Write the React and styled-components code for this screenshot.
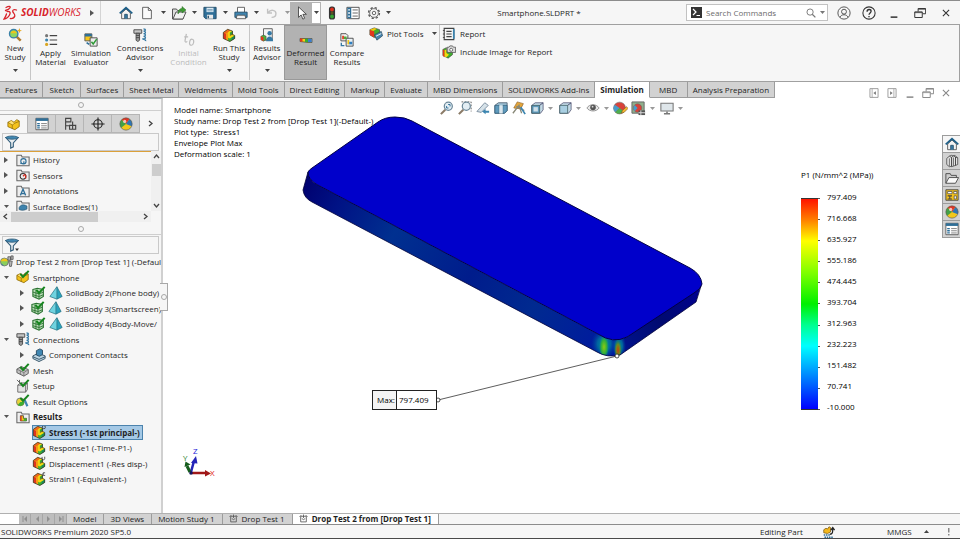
import React from 'react';
import styled, { createGlobalStyle, css } from 'styled-components';

const GlobalStyle = createGlobalStyle`
  * { box-sizing: border-box; }
  body {
    margin: 0;
    background: #fff;
    color: #1e1e1e;
    font-family: "Open Sans", "Noto Sans", sans-serif;
    font-size: 8px;
    line-height: 9px;
  }
  button, input {
    font: inherit;
    color: inherit;
    padding: 0;
    margin: 0;
    border: 0;
    background: none;
  }
  ul { list-style: none; margin: 0; padding: 0; }
  svg { display: block; flex: none; }
`

const Page = styled.div`
  display: flex;
  flex-direction: column;
  min-height: 100vh;
  border-top: 1px solid #8c8c8c;
  border-bottom: 1px solid #4a4a4a;
  background: #f6f6f6;
`

/* ---------- title bar ---------- */

const TitleBar = styled.header`
  display: flex;
  align-items: center;
  height: 24px;
  border-bottom: 1px solid #a0a0a0;
`
const Brand = styled.div`
  display: flex;
  align-items: center;
  gap: 3px;
  width: 101px;
  height: 23px;
  padding-left: 3px;
  border-right: 1px solid #d4d4d4;
`
const BrandName = styled.span`
  flex: 1;
  font-size: 10px;
  font-style: italic;
  color: #d8232a;
`
const BrandArrow = styled.button`
  width: 10px;
  display: flex;
`
const QuickBar = styled.div`
  display: flex;
  align-items: center;
  padding-left: 17px;
`
const QuickButton = styled.button`
  width: ${p => p.$w || 16}px;
  height: 20px;
  display: flex;
  align-items: center;
  justify-content: center;
`
const PointerGroup = styled.div`
  display: flex;
  border: 1px solid #b4b4b4;
  background: #fff;
  button:first-child {
    background: #b4b4b4;
  }
`
const DocTitle = styled.div`
  flex: 1;
  text-align: center;
`
const SearchBox = styled.label`
  display: flex;
  align-items: center;
  gap: 4px;
  width: 142px;
  height: 17px;
  padding: 0 2px 0 4px;
  border: 1px solid #c2c2c2;
  background: #fff;
  input {
    flex: 1;
    min-width: 0;
    outline: none;
  }
  input::placeholder { color: #6b6b6b; opacity: 1; }
`
const WindowButtons = styled.div`
  display: flex;
  align-items: center;
  padding: 0 2px 0 3px;
`

/* ---------- ribbon ---------- */

const Ribbon = styled.div`
  display: flex;
  height: 57px;
  border-bottom: 1px solid #a0a0a0;
  border-right: 1px solid #a0a0a0;
  padding-bottom: 1px;
`
const RibbonButton = styled.button`
  width: ${p => p.$w}px;
  display: flex;
  flex-direction: column;
  align-items: center;
  text-align: center;
  padding-top: ${p => (p.$menu ? 3 : 8)}px;
  border-right: ${p => (p.$line ? '1px solid #c6c6c6' : '0')};
  white-space: nowrap;
  span { margin-top: 1px; white-space: pre; }
  svg:last-child:not(:first-child) { margin-top: 8px; }
  ${p => p.$pressed && css`
    background: #b2b2b2;
    border: 1px solid #999;
    padding-top: 7px;
  `}
  &:disabled { color: #bcbcbc; }
`
const RibbonStack = styled.div`
  display: flex;
  flex-direction: column;
  gap: 3px;
  padding: 1px 0 0 2px;
  width: ${p => p.$w || 'auto'};
  border-right: ${p => (p.$line ? '1px solid #c6c6c6' : '0')};
`
const RibbonRow = styled.button`
  display: flex;
  align-items: center;
  gap: 4px;
  height: 15px;
  white-space: nowrap;
  svg:last-child:not(:first-child) { margin-left: 5px; }
`
const TabRow = styled.nav`
  display: flex;
  height: 16px;
  background: #fff;
`
const Tab = styled.button`
  min-width: 38px;
  padding: 0 5px;
  border-right: 1px solid #9c9c9c;
  border-bottom: 1px solid #9c9c9c;
  background: #d2d2d2;
  white-space: nowrap;
  ${p => p.$active && css`
    background: #fff;
    border-bottom-color: #fff;
    font-weight: 700;
  `}
`
const DocButtons = styled.div`
  display: flex;
  margin-left: auto;
  padding: 2px 5px 0 0;
  button { width: 18px; height: 18px; display: flex; align-items: center; justify-content: center; }
`

/* ---------- feature manager ---------- */

const Main = styled.main`
  flex: 1;
  display: flex;
`
const Side = styled.aside`
  position: relative;
  width: 163px;
  flex: none;
  border-top: 1px solid #a9b4b7;
  border-right: 2px solid #d0d0d0;
`
const Grip = styled.div`
  height: 12px;
  display: flex;
  align-items: center;
  justify-content: center;
  border-bottom: 1px solid #cfcfcf;
  margin-bottom: ${p => p.$gap}px;
  &::before {
    content: '';
    width: 4px;
    height: 4px;
    border: 1px solid #a8a8a8;
    border-radius: 50%;
  }
`
const ManagerTabs = styled.div`
  display: flex;
  height: 19px;
`
const ManagerTab = styled.button`
  width: 28px;
  display: flex;
  align-items: center;
  justify-content: center;
  background: ${p => (p.$active ? '#f6f6f6' : '#d2d2d2')};
  border: solid #b5b5b5;
  border-width: 1px 1px ${p => (p.$active ? 0 : 1)}px 0;
`
const MoreTabs = styled.button`
  flex: 1;
  display: flex;
  align-items: center;
  justify-content: center;
`
const FilterBox = styled.label`
  display: flex;
  align-items: center;
  height: 18px;
  margin: 0 2px;
  padding-left: 2px;
  border: 1px solid #c9c9c9;
  input { flex: 1; min-width: 0; outline: none; }
`
const FeatureArea = styled.div`
  display: grid;
  grid-template-columns: 1fr 10px;
  grid-template-rows: 60px 11px;
  margin-bottom: 1px;
`
const FeatureTree = styled.ul`
  overflow: hidden;
  border-top: 1px solid #dba03a;
`
const StudyTree = styled.ul`
  overflow: hidden;
`
const TreeRow = styled.li`
  display: flex;
  align-items: center;
  height: 15px;
  padding-left: ${p => p.$level * 16}px;
  white-space: nowrap;
  font-weight: ${p => (p.$bold ? 700 : 400)};
  &:nth-child(even) { height: 16px; }
`
const Twisty = styled.span`
  width: 13px;
  height: 11px;
  padding-left: 4px;
  margin-right: 3px;
  display: flex;
  align-items: center;
`
const NodeLabel = styled.span`
  display: flex;
  align-items: center;
  gap: ${p => (p.$root ? 2 : 3)}px;
  ${p => p.$selected && css`
    height: 15px;
    padding-right: 3px;
    background: #a5c9e6;
    outline: 1px solid #4c83ad;
    outline-offset: -1px;
    font-weight: 700;
  `}
`
const ScrollTrack = styled.div`
  display: flex;
  flex-direction: ${p => (p.$vertical ? 'column' : 'row')};
  align-items: center;
  justify-content: space-between;
  background: #f0f0f0;
  padding: ${p => (p.$vertical ? '2px 0' : '0 2px')};
`
const Thumb = styled.span`
  background: #cdcdcd;
  width: ${p => p.$w}px;
  height: ${p => p.$h}px;
  margin: ${p => (p.$vertical ? '4px 0 auto' : '0 auto 0 2px')};
`
const SplitHandle = styled.div`
  position: absolute;
  z-index: 1;
  right: -7px;
  top: 184px;
  width: 8px;
  height: 28px;
  display: flex;
  align-items: center;
  justify-content: center;
  background: #f6f6f6;
  border: 1px solid #a8a8a8;
  border-left: 0;
  &::before {
    content: '';
    width: 4px;
    height: 4px;
    border: 1px solid #a8a8a8;
    border-radius: 50%;
  }
`

/* ---------- graphics area ---------- */

const Viewport = styled.section`
  position: relative;
  flex: 1;
  min-height: 415px;
  overflow: hidden;
  background: #fff;
  color: #000;
`
const HeadsUp = styled.div`
  position: relative;
  z-index: 1;
  display: flex;
  justify-content: center;
  align-items: center;
  height: 20px;
`
const HudButton = styled.button`
  width: ${p => p.$w || 18}px;
  height: 16px;
  display: flex;
  align-items: center;
  justify-content: center;
`
const Scene = styled.svg`
  position: absolute;
  left: 0;
  top: 0;
`
const Notes = styled.div`
  position: absolute;
  left: 11px;
  top: 6px;
  line-height: 11px;
  white-space: pre;
`
const Callout = styled.div`
  position: absolute;
  left: 209px;
  top: 292px;
  display: flex;
  height: 20px;
  border: 1px solid #222;
  background: #fff;
  line-height: 18px;
  span { width: 24px; padding-left: 4px; background: #f4f4f4; border-right: 1px solid #222; }
  b { width: 39px; padding-left: 2px; font-weight: 400; }
`
const Legend = styled.div`
  position: absolute;
  right: 79px;
  top: 72px;
  width: 80px;
  white-space: nowrap;
`
const LegendScale = styled.div`
  display: flex;
  margin-top: 13px;
`
const ColorBar = styled.div`
  width: 17px;
  margin: 6px 0 1px;
  height: 212px;
  border: solid #333;
  border-width: 1px 0;
  background: linear-gradient(#ff1400, #ff8000 10%, #ffff00 20%, #80ff00 35%, #00f000 50%, #00ff90 60%, #00ffff 70%, #0080ff 85%, #0000ff);
`
const Ticks = styled.div`
  width: 2px;
  margin: 6px 0 1px;
  display: flex;
  flex-direction: column;
  justify-content: space-between;
  i { height: 1px; background: #555; }
`
const LegendValues = styled.div`
  display: flex;
  flex-direction: column;
  justify-content: space-between;
  padding-left: 7px;
`
const TaskPane = styled.div`
  position: absolute;
  right: 0;
  top: 37px;
  display: flex;
  flex-direction: column;
  border: solid #9c9c9c;
  border-width: 1px 0 0 1px;
  button {
    width: 17px;
    height: 17px;
    display: flex;
    align-items: center;
    justify-content: center;
    background: #d2d2d2;
    border-bottom: 1px solid #9c9c9c;
  }
  button:first-child { background: #f6f6f6; }
`

/* ---------- bottom ---------- */

const StudyTabs = styled.nav`
  display: flex;
  height: 12px;
  border-top: 1px solid #b0b0b0;
  border-bottom: 1px solid #8c8c8c;
`
const TabPad = styled.div`
  width: 19px;
  background: #fff;
`
const StepButton = styled.button`
  width: 12px;
  display: flex;
  align-items: center;
  justify-content: center;
  background: #bdbdbd;
  border-right: 1px solid #a6a6a6;
`
const StudyTab = styled.button`
  display: flex;
  align-items: center;
  gap: 4px;
  padding: 0 7px 1px 6px;
  white-space: nowrap;
  background: ${p => (p.$active ? '#fff' : '#d2d2d2')};
  font-weight: ${p => (p.$active ? 700 : 400)};
  border-right: 1px solid #9c9c9c;
`
const StatusBar = styled.footer`
  display: flex;
  align-items: center;
  height: 13px;
  padding: 0 9px 0 1px;
`
const Product = styled.span`
  flex: 1;
`
const StatusItem = styled.span`
  width: ${p => p.$w}px;
  display: flex;
`

/* ---------- icons ---------- */

const Svg = ({ s = 14, vb = 16, children }) => (
  <svg width={s} height={s} viewBox={`0 0 ${vb} ${vb}`} fill="none" aria-hidden="true">{children}</svg>
)

const Caret = ({ color = '#444' }) => (
  <svg width="5" height="3" viewBox="0 0 5 3"><path d="M0 0h5L2.500 3z" fill={color} /></svg>
)
const Closed = () => (
  <svg width="4" height="6" viewBox="0 0 4 6"><path d="M0 0l4 3-4 3z" fill="#555" /></svg>
)
const Chevron = ({ dir }) => {
  const turn = { right: 0, down: 90, left: 180, up: 270 }[dir]
  return (
    <svg width="7" height="7" viewBox="0 0 7 7" fill="none">
      <path d="M2 1l3 2.500-3 2.500" stroke="#444" strokeWidth="1.300" transform={`rotate(${turn} 3.500 3.500)`} />
    </svg>
  )
}
const DsLogo = () => (
  <svg width="15" height="16" viewBox="0 0 15 16" fill="none" stroke="#d8232a" strokeWidth="1.300" strokeLinecap="round">
    <path d="M3 2.500C5.500 1 8 1 7 2.800 6.500 4 4.500 5 2.500 5.500" />
    <path d="M4 6.500C7 6 7.800 7.500 6.500 10 5.300 12.300 3 13.800 1 14c1-1.500 2-3 2.500-5" />
    <path d="M13.500 5c-2-.8-4-.3-3.800 1.300.2 1.500 2.600 2.700 2.100 4.700-.5 1.900-2.300 2.700-4.500 2.500" />
  </svg>
)
const Home = () => (
  <Svg>
    <path d="M3 8v6.500h10V8L8 3.500z" fill="#f3f3f3" stroke="#555" />
    <path d="M6.500 14.500V9.500h3v5" fill="#3a7ca5" stroke="#29506b" />
    <path d="M.8 8.500L8 2l7.200 6.500" stroke="#1d5e87" strokeWidth="2" />
  </Svg>
)
const NewDoc = () => (
  <Svg><path d="M3 1.500h6.500L13 5v9.500H3z" fill="#fafafa" stroke="#555" /><path d="M9.500 1.500V5H13" stroke="#555" /></Svg>
)
const OpenDoc = () => (
  <Svg s={16}>
    <path d="M1.500 14V4h4l1 1.500H12V14z" fill="#ddd" stroke="#555" />
    <path d="M2 14L5 7h10l-3 7z" fill="#f2f2f2" stroke="#555" />
    <path d="M7 9c0-4 2-5.500 4-5.500V1.500L15 5l-4 3V6C9 6 8 7 7 9z" fill="#3f9b35" stroke="#2b6d25" strokeWidth=".5" />
  </Svg>
)
const Save = () => (
  <Svg>
    <path d="M1 1.500h14v13H3l-2-2z" fill="#2f6f98" stroke="#234b66" />
    <path d="M4 2h8v5H4z" fill="#dbe9f2" /><path d="M4.500 10h7v4.500h-7z" fill="#e9e9e9" />
    <path d="M6 11v3" stroke="#234b66" strokeWidth="1.500" /><path d="M5 4h6M5 5.500h6" stroke="#7ba0b8" />
  </Svg>
)
const Print = () => (
  <Svg>
    <path d="M4 7V1.500h8V7" fill="#fff" stroke="#555" /><path d="M1 7h14v6H1z" fill="#3f85b0" stroke="#234b66" />
    <path d="M3.500 10.500h9l1 4h-11z" fill="#f3f3f3" stroke="#555" />
  </Svg>
)
const Undo = () => (
  <Svg><path d="M3 3v5h5M3.500 7.500c3-4 9-3 9 1s-3 4.500-5 4.500" stroke="#c2c2c2" strokeWidth="1.600" /></Svg>
)
const Pointer = () => (
  <Svg><path d="M4 1v12l3-2.800 2 4.800 2-1-2-4.500h4z" fill="#fff" stroke="#333" strokeWidth=".9" /></Svg>
)
const Traffic = () => (
  <Svg>
    <rect x="4.500" y=".5" width="7" height="15" rx="3" fill="#333" />
    <circle cx="8" cy="4" r="2.200" fill="#e0301e" /><circle cx="8" cy="8" r="1.600" fill="#5b5320" /><circle cx="8" cy="12" r="2.200" fill="#35a632" />
  </Svg>
)
const ListPanel = () => (
  <Svg>
    <path d="M1 1.500h14v13H1z" fill="#fff" stroke="#444" /><path d="M1.500 2h4.500v12H1.500z" fill="#2f6f98" />
    <path d="M2.500 4.500h2M2.500 8h2M2.500 11.500h2" stroke="#fff" strokeWidth="1.500" />
    <path d="M7.500 4.500h6M7.500 8h6M7.500 11.500h6" stroke="#555" />
  </Svg>
)
const PropertyPanel = () => (
  <Svg>
    <path d="M1 1.500h14v13H1z" fill="#fff" stroke="#555" /><path d="M1 1.500h14v3H1z" fill="#2f6f98" />
    <path d="M2.500 7.500h3M2.500 10h3M2.500 12.500h3" stroke="#2f6f98" strokeWidth="1.500" />
    <path d="M7 7.500h6.500M7 10h6.500M7 12.500h6.500" stroke="#777" />
  </Svg>
)
const Gear = () => (
  <Svg>
    <circle cx="8" cy="8" r="6.200" stroke="#555" strokeWidth="1.600" strokeDasharray="2.600 2.270" />
    <circle cx="8" cy="8" r="5" fill="#f6f6f6" stroke="#555" strokeWidth=".9" /><circle cx="8" cy="8" r="2" stroke="#555" />
  </Svg>
)
const Prompt = () => (
  <svg width="11" height="11" viewBox="0 0 11 11"><path d="M0 0h11v11H0z" fill="#333" /><path d="M2 2l3 3-3 3M5.500 8.500H9" stroke="#fff" strokeWidth="1.200" fill="none" /></svg>
)
const Magnifier = () => (
  <Svg s={10}><circle cx="6.500" cy="6.500" r="5" stroke="#777" strokeWidth="1.500" /><path d="M10 10l5 5" stroke="#777" strokeWidth="2" /></Svg>
)
const User = () => (
  <Svg><circle cx="8" cy="8" r="7" stroke="#444" /><circle cx="8" cy="6.500" r="2.800" stroke="#444" /><path d="M3.500 13c1-4 8-4 9 0" stroke="#444" /></Svg>
)
const Help = () => (
  <Svg><circle cx="8" cy="8" r="7" stroke="#333" strokeWidth="1.200" /><path d="M5.800 6.500c0-3.500 4.600-3 4.600-.5C10.400 7.800 8 8 8 10M8 11.300v1.600" stroke="#333" strokeWidth="1.500" /></Svg>
)
const Minimize = ({ c = '#333' }) => <Svg s={12}><path d="M3.500 13.500h9" stroke={c} strokeWidth="2" /></Svg>
const Restore = ({ c = '#333' }) => (
  <Svg s={12}><path d="M5.500 6V2h10v7h-4" stroke={c} strokeWidth="1.300" /><path d="M1 6.500h10V14H1z" stroke={c} strokeWidth="1.300" /><path d="M1 7.500h10M5.500 3h10" stroke={c} /></Svg>
)
const CloseX = ({ c = '#333' }) => <Svg s={10}><path d="M3 3l10 10M13 3L3 13" stroke={c} strokeWidth="1.700" /></Svg>
const Dock = ({ flip }) => (
  <Svg s={10}>
    <g transform={flip ? 'translate(16 0) scale(-1 1)' : undefined}>
      <path d="M1.500 1h13v14h-13z" stroke="#9a9a9a" strokeWidth="1.500" /><path d="M5 1v14" stroke="#9a9a9a" strokeWidth="1.200" /><path d="M11 5v6L7 8z" fill="#777" />
    </g>
  </Svg>
)

// the rainbow bracket that marks every simulation plot
const Plot = ({ s = 14, mark }) => (
  <Svg s={s}>
    <path d="M1.500 5l5-3.500 5.500 2v3l2.500 2V12L9 15.500 1.500 12z" fill="#f5d90f" />
    <path d="M1.500 5l3.500 1.500V13.500L1.500 12z" fill="#e0351f" />
    <path d="M1.500 5l5-3.500 3 1L5 6.500z" fill="#ee6a1a" />
    <path d="M5 6.500l2-1v8l2 2-4-2z" fill="#f59a14" />
    <path d="M12 3.500v3L9 8V5.500z" fill="#2f9c33" />
    <path d="M7 11l2 1 5.500-3.500V12L9 15.500l-2-1z" fill="#3fae2f" />
    <path d="M11 11l3.500-2.200V12L11 14.200z" fill="#1f8a5a" />
    <path d="M12 3.500L6.500 1.500l-5 3.500v7L9 15.500l5.500-3.500V8.500l-2.500-1z" stroke="#2a2a2a" strokeWidth=".8" />
    <path d="M9 8.500l3-1.500" stroke="#333" strokeWidth=".8" />
    {mark === 'o' && <circle cx="13.500" cy="2.500" r="1.800" stroke="#333" strokeWidth=".9" />}
    {mark === 'u' && <path d="M11.500 1v2.500c1 1.500 3 1 3-.5V.8" stroke="#333" strokeWidth=".9" />}
    {mark === 'e' && <path d="M15 1c-3-.8-3.500 1-1.500 1.300-2.500.2-2 2.200 1.500 1.500" stroke="#333" strokeWidth=".9" />}
  </Svg>
)
const NewStudy = () => (
  <Svg>
    <path d="M9.500 9.500l5 5" stroke="#b07a2c" strokeWidth="2.800" />
    <circle cx="6.500" cy="6.500" r="4.800" fill="#8fd45f" stroke="#3a81a8" strokeWidth="1.600" /><path d="M3 6c1.500-4 6-3.500 7 0z" fill="#f0c419" />
    <path d="M13 0l.8 2.200L16 3l-2.200.8L13 6l-.8-2.200L10 3l2.200-.8z" fill="#e9a81c" />
  </Svg>
)
const Material = () => (
  <Svg>
    <circle cx="3" cy="3" r="1.800" fill="#777" /><circle cx="3" cy="8" r="1.800" fill="#3c85b0" /><circle cx="3" cy="13" r="1.800" fill="#d9a520" />
    <path d="M6.500 3H15M6.500 8H15M6.500 13H15" stroke="#444" strokeWidth="1.400" />
  </Svg>
)
const Evaluator = () => (
  <Svg>
    <path d="M1 1h8v8H1z" fill="#f6c61c" stroke="#555" /><path d="M1 1h8v3H1z" fill="#2f6f98" />
    <path d="M7 5.500h8v9.500H7z" fill="#eee" stroke="#444" /><path d="M8.500 10l2 2.500 4-5.500" stroke="#2c9a35" strokeWidth="1.700" /><path d="M3 11l3 2" stroke="#2f6f98" strokeWidth="2" />
  </Svg>
)
const Bolt = () => (
  <Svg>
    <path d="M1 2h9v4H1z" fill="#c6c6c6" stroke="#444" /><path d="M3.500 6h4v8l-2 1.500-2-1.500z" fill="#999" stroke="#444" /><path d="M3.500 8.500h4M3.500 11h4" stroke="#444" />
    <path d="M12 1c3 0 3 2.500 0 2.500 3 0 3 3 0 3 3 0 3 3 0 3 3 0 3 3 0 3s3 0 2.500 2.500" stroke="#3478a3" strokeWidth="1.500" />
  </Svg>
)
const ResultsIcon = () => (
  <Svg>
    <path d="M4 .8h10v13H4z" fill="#f3f3f3" stroke="#555" /><circle cx="11" cy="6" r="2.500" fill="#3478a3" /><path d="M7 15c0-7 8-7 8 0z" fill="#3478a3" />
    <path d="M1 9.500l3-1.500 3 1.500v4L4 15l-3-1.500z" fill="#4caf3a" stroke="#333" strokeWidth=".5" /><path d="M1 9.500l3 1.200V15l-3-1.500z" fill="#e3371e" />
  </Svg>
)
const Deformed = () => (
  <svg width="14" height="14" viewBox="0 0 14 14">
    <path d="M1 5.500h12v4H9L1 8.500z" fill="#f3d315" stroke="#333" strokeWidth=".6" />
    <path d="M1 5.500h2.500v3.200L1 8.500z" fill="#e3371e" /><path d="M6 5.700h3v3.500L6 9z" fill="#39a935" /><path d="M9 5.700h3.800v3.500H9z" fill="#3a7bd0" />
  </svg>
)
const Compare = () => (
  <Svg>
    <path d="M1 .8h6l2 2V9H1z" fill="#f3f3f3" stroke="#444" /><path d="M7 6h8v9H7z" fill="#e9f1f6" stroke="#444" />
    <path d="M2.500 3h2v4h-2z" fill="#e3371e" /><path d="M4.500 4h3v3h-3z" fill="#4caf3a" /><path d="M8.500 8h2v5h-2z" fill="#f2c314" /><path d="M10.500 10H14v3h-3.500z" fill="#2f7fc0" />
    <path d="M1.500 11v3.500H5" stroke="#3478a3" strokeWidth="1.500" />
  </Svg>
)
const PlotTools = () => (
  <Svg>
    <path d="M1 3l5-2 6 2v6l-6 3-5-3z" fill="#3fae2f" stroke="#333" strokeWidth=".7" /><path d="M1 3l5 2v7L1 9z" fill="#e3371e" /><path d="M1 3l5-2 3 1-4 2.500z" fill="#f5c60f" />
    <path d="M6 9l8-4 1.500 5L9 15z" fill="#4785ad" stroke="#27475c" strokeWidth=".8" /><path d="M8 10.500l6-3" stroke="#fff" />
  </Svg>
)
const Report = () => (
  <Svg><path d="M2.500 1.500h11v13h-11z" fill="#f6f6f6" stroke="#444" strokeWidth="1.300" /><path d="M5 5h6M5 8h6M5 11h6" stroke="#444" strokeWidth="1.200" /><path d="M1 4h2M1 8h2M1 12h2" stroke="#444" /><path d="M13.500 2.500v11" stroke="#3c85b0" strokeWidth="2" /></Svg>
)
const PlotCamera = () => (
  <Svg>
    <path d="M1 5l4-2v4l3 1 4-1v4l-5 4-6-3z" fill="#3fae2f" stroke="#333" strokeWidth=".6" /><path d="M1 5l2 1v8l-2-1.500z" fill="#e3371e" /><path d="M3 6l2-1v4l3 2-3 3-2-1z" fill="#f5d90f" />
    <path d="M6 2.500h2l1-1.500h3l1 1.500h2.500v6H6z" fill="#d8d8d8" stroke="#444" strokeWidth=".8" /><circle cx="10.500" cy="5.500" r="1.700" fill="#fff" stroke="#444" strokeWidth=".8" />
  </Svg>
)
const Tick = () => <path d="M5 4.500L8 8l6.500-7" stroke="#17851f" strokeWidth="2.300" fill="none" />
const Part = ({ tick }) => (
  <Svg>
    <path d="M1 6l4-2 3 2 3-3 3 1.500v6.500l-5 3.500L1 11z" fill="#f4c21c" stroke="#8b6a0c" strokeWidth=".9" />
    <path d="M1 6l5 3v4.500M6 9l3-2 5-2" stroke="#8b6a0c" strokeWidth=".8" /><path d="M2 6l3-1.500L8 7 6 8.500z" fill="#fbe07a" />
    {tick && <Tick />}
  </Svg>
)
const Config = () => (
  <Svg><path d="M3 14.500V1.500h6v4H3M3 10h5M11 5v4.500H7.500v4.500h7V9.500H11zM11 9.500V14" stroke="#444" strokeWidth="1.300" /></Svg>
)
const Target = () => (
  <Svg><circle cx="8" cy="8" r="4.800" stroke="#222" strokeWidth="1.300" /><path d="M8 .5v15M.5 8h15" stroke="#222" strokeWidth="1.300" /></Svg>
)
const Ball = ({ s = 14 }) => (
  <Svg s={s}>
    <circle cx="8" cy="8" r="7" fill="#f2c81b" /><path d="M8 8L3 3a7 7 0 0 1 9-.7z" fill="#e03525" /><path d="M8 8L12 2.300A7 7 0 0 1 14.500 10.500z" fill="#2f75b5" />
    <path d="M8 8L2.500 12.300A7 7 0 0 1 3 3z" fill="#43a047" /><circle cx="8" cy="8" r="7" stroke="#555" strokeWidth=".7" /><circle cx="6.500" cy="5" r="1.800" fill="#fff" opacity=".7" />
  </Svg>
)
const Funnel = ({ menu }) => (
  <Svg>
    <path d="M1 3L6.500 9v6l3-1.500V9L15 3z" fill="#e9eef1" stroke="#355f7c" strokeWidth="1.300" />
    <ellipse cx="8" cy="3" rx="7" ry="1.800" fill="#3f87b2" stroke="#355f7c" />
    {menu && <path d="M11.500 12h4.500l-2.300 2.800z" fill="#333" />}
  </Svg>
)
const Folder = ({ kind }) => (
  <Svg>
    <path d="M1 14.500V2.500h5L7 4.500h8v10z" fill="#eee" stroke="#666" strokeWidth="1.200" />
    {kind === 'history' && <><circle cx="8.500" cy="9.500" r="3" stroke="#2f6f98" strokeWidth="1.300" /><path d="M5 12h4V9.500" stroke="#2f6f98" strokeWidth="1.300" /></>}
    {kind === 'sensor' && <><circle cx="8" cy="9.500" r="3.300" stroke="#333" strokeWidth="1.200" /><path d="M8 9.500l2.500-2.500M11 8v4" stroke="#d02c20" strokeWidth="1.500" /></>}
    {kind === 'note' && <path d="M5 13l3-7 3 7M6 11h4" stroke="#2f6f98" strokeWidth="1.500" />}
    {kind === 'surface' && <path d="M3.500 10c2-4 5-4 9-2v3.500c-3 1.500-6 2-9 .5z" fill="#3e83ad" stroke="#28546f" strokeWidth=".7" />}
    {kind === 'result' && <><path d="M5 6.500v6h7V9.500H8.500v-3z" fill="#f1cb1b" stroke="#333" strokeWidth=".8" /><path d="M5 6.500h1.500v6H5z" fill="#e3371e" /><path d="M9 9.500h3v3H9z" fill="#3fae2f" /></>}
  </Svg>
)
const StudyIcon = () => (
  <Svg>
    <circle cx="5" cy="8" r="4.500" fill="#8bcf5c" stroke="#777" /><path d="M1 7c1-4 7-4 8 0z" fill="#f0c419" /><path d="M5 12.500A4.500 4.500 0 0 1 1 9z" fill="#2f75b5" />
    <path d="M9 2h3v4H9zM12.500 1H15v4h-2.500zM10 7h4l-1 6h-2z" fill="#b7b7b7" stroke="#444" strokeWidth=".8" />
  </Svg>
)
const Meshed = () => (
  <Svg>
    <path d="M1 4l5-1.500 7 1.500v8l-5 3-7-3z" fill="#b9dcb6" stroke="#2b7232" strokeWidth="1.200" />
    <path d="M1 7l7 2 5-2M1 10l7 2 5-2M4.500 4v10M8 6v9" stroke="#2b7232" />
    <Tick />
  </Svg>
)
const Pyramid = () => (
  <Svg><path d="M9 .8L1 12l8 3z" fill="#6fd3e0" /><path d="M9 .8L15 12l-6 3z" fill="#2aa3bd" /><path d="M9 .8L1 12l8 3 6-3z M9 1v14" stroke="#22707f" strokeWidth=".8" /></Svg>
)
const Contacts = () => (
  <Svg>
    <path d="M1 9l6-3 8 3v3l-7 3.500L1 12z" fill="#bcd4e2" stroke="#2d4c60" /><path d="M5 3l4-2 3 1.500v5L8.500 9.500 5 8z" fill="#3f87b2" stroke="#23475f" /><path d="M1 10l7 3 7-3" stroke="#2d4c60" />
  </Svg>
)
const Block = () => (
  <Svg>
    <path d="M1 7l5-3 8 3.500v4.500l-5 3L1 11z" fill="#c4c4c4" stroke="#555" /><path d="M1 7l8 4 5-3.500M9 11v4M4 5.500l7 3.500M5 9v4" stroke="#666" strokeWidth=".8" /><Tick />
  </Svg>
)
const SetupIcon = () => (
  <Svg>
    <path d="M2 7h9v8H2zM2 7l3-2.500h8L11 7M13 4.500V12l-2 3" fill="#e3e3e3" stroke="#666" /><path d="M1 1l4 4M4 1v3" stroke="#555" /><Tick />
  </Svg>
)
const OptionsIcon = () => (
  <Svg>
    <circle cx="5" cy="9" r="4.500" fill="#e9d23a" stroke="#777" /><path d="M5 9h4.500A4.500 4.500 0 0 1 2 12.500z" fill="#3fae2f" /><path d="M10 7l3 7" stroke="#3c85b0" strokeWidth="2.500" /><Tick />
  </Svg>
)
const Library = () => (
  <Svg>
    <path d="M2 5l3-2.500L7.500 4v10L5 14.500 2 12zM7.500 4l2-2L12 3.500V13l-4.500 1.500zM12 3.500l2.500 1V12L12 13z" fill="#e4e4e4" stroke="#444" strokeWidth=".9" />
    <path d="M5 5v9M9.700 4v9.500M5 2.500l2-1 2.500.5M9.500 2l2-.5 3 3" stroke="#444" strokeWidth=".8" />
  </Svg>
)
const FolderOpen = () => (
  <Svg><path d="M1 14V3h5l1 2h6v3" fill="#ccc" stroke="#444" /><path d="M1 14L4.500 7.500H15.500L12 14z" fill="#fafafa" stroke="#444" /></Svg>
)
const Palette = () => (
  <Svg>
    <path d="M1 2h14v12H1z" fill="#f4c21c" stroke="#444" /><path d="M3 4h5v2.500H3zM10 4h3.500v2.500H10zM10.500 9H13v3.500h-2.500z" fill="#fff" stroke="#444" strokeWidth=".8" />
    <path d="M3 9h5M5.500 9v3M3 12.500h5" stroke="#444" strokeWidth="1.200" />
  </Svg>
)

const ZoomFit = ({ area }) => (
  <Svg>
    {area ? <path d="M4 1h11v11" stroke="#555" strokeWidth="1" strokeDasharray="2 1.500" /> : null}
    <path d="M6 10L1 15" stroke="#8a7a66" strokeWidth="2.400" /><circle cx="9.500" cy="6" r="4.600" fill="#e3eef4" stroke="#6b8798" strokeWidth="1.400" />
    {!area && <path d="M7.500 8V5.800M7.500 8h2.200M11.500 4v2.200M11.500 4H9.300" stroke="#2f6f98" strokeWidth="1.100" />}
  </Svg>
)
const PrevView = () => (
  <Svg><path d="M1 12L10 2l4 3-8 8z" fill="#d6e2e9" stroke="#76889a" /><path d="M7 12l4-3v2h4v2.500h-4V15z" fill="#3c85b0" /></Svg>
)
const Section = () => (
  <Svg><path d="M1 5l4-3h10v9l-3 3H1z" fill="#9ec1d4" stroke="#567" /><path d="M1 5h5v9H1zM10 5h5v6l-3 3h-2z" fill="#5f9abc" stroke="#2d5a76" strokeWidth=".8" /><path d="M6 5h4v9H6z" fill="#dbe7ee" /></Svg>
)
const Dynamic = () => (
  <Svg><path d="M2 8l4-7 7 2-3 6z" fill="#e4a63a" stroke="#8a5a20" strokeWidth=".7" /><path d="M1 14L8 5l3 9M5 6l9 5" stroke="#887" strokeWidth="1.500" /><path d="M10 7l5 8" stroke="#3c85b0" strokeWidth="2" /></Svg>
)
const Cube = ({ face }) => (
  <Svg>
    <path d="M2 5l4-3h9v8l-3 4H2z" fill="#c3dae6" stroke="#446" strokeWidth=".8" />
    <path d="M2 5h9v9H2z" fill={face ? '#a9cfe2' : '#5f9abc'} stroke="#355" strokeWidth=".8" /><path d="M11 5l4-3" stroke="#446" />
    {!face && <path d="M4 7h5v5H4z" fill="#cfe0ea" />}
  </Svg>
)
const Eye = () => (
  <Svg><path d="M1 8c3-5 11-5 14 0-3 4.500-11 4.500-14 0z" fill="#e9e9e9" stroke="#8a8a8a" /><circle cx="8" cy="7.500" r="3.200" fill="#555" /><circle cx="7.500" cy="6.500" r="1" fill="#ddd" /></Svg>
)
const Appearance = ({ scene }) => (
  <Svg s={15}>
    {scene && <path d="M1 1h13v12H1z" fill="#8fb08c" stroke="#666" />}
    <circle cx="7" cy="7.500" r={scene ? 4.500 : 6.300} fill="#d9423a" stroke="#666" strokeWidth=".6" />
    {scene
      ? <><path d="M7 7.500L4 10.800A4.500 4.500 0 0 1 4 4.200z" fill="#4a9cc9" /><path d="M8 10h7v5H8z" fill="#555" /><path d="M8 12.500h7M10.500 10v5" stroke="#ddd" /></>
      : <><path d="M7 7.500L2.500 12A6 6 0 0 1 2 4z" fill="#4a9cc9" /><path d="M7 7.500L2.500 12c3 2.500 7 2 9-1z" fill="#4caf50" /><path d="M9 13l1-3 4.500-4L16 8l-4 4z" fill="#f2b632" stroke="#7a5a20" strokeWidth=".6" /></>}
  </Svg>
)
const Monitor = () => (
  <Svg><path d="M1 2.500h14v9H1z" fill="#dfe6ea" stroke="#777" strokeWidth="1.200" /><path d="M8 12v2.500M4.500 14.500h7" stroke="#777" strokeWidth="1.800" /></Svg>
)
const StudyMark = () => (
  <Svg s={9}><path d="M3 4h10v10H3z" stroke="#555" strokeWidth="1.500" /><path d="M1 5l3-3M12 2l3 3M8 1v6M5 8l3 2 3-2" stroke="#555" strokeWidth="1.500" /></Svg>
)
const StepMark = ({ end, flip }) => (
  <svg width="6" height="6" viewBox="0 0 6 6"><g transform={flip ? 'translate(6 0) scale(-1 1)' : undefined}><path d="M5 0v6L2 3z" fill="#8f8f8f" />{end && <path d="M.5 0h1v6h-1z" fill="#8f8f8f" />}</g></svg>
)
const Rebuild = () => (
  <Svg s={12}>
    <path d="M1 5l3-2 2 1 2-3 2 1v6l-4 2-5-1z" fill="#f4b81c" stroke="#7c5b10" /><path d="M9 11c4 0 4-3 4-7M10.500 5.500L13 2l2.500 3.500" stroke="#222" strokeWidth="1.700" />
    <path d="M1 12h9M2 15h11" stroke="#2f6f98" strokeWidth="1.800" strokeDasharray="2 1" />
  </Svg>
)
const Tag = () => (
  <svg width="4" height="8" viewBox="0 0 4 8"><path d="M1 0h1.500v4.500H1zM1 6h1.500v1.500H1z" fill="#888" /></svg>
)
const InitialIcon = () => (
  <Svg><path d="M5 1L3.500 8.500c-.3 2 1 2.500 2.500 1M2.500 4.500h4.500" stroke="#bcbcbc" strokeWidth="1.400" /><ellipse cx="11" cy="10.500" rx="2.300" ry="3.500" stroke="#bcbcbc" strokeWidth="1.300" transform="rotate(12 11 10.500)" /></Svg>
)

/* ---------- data ---------- */

const commands = [
  { label: 'New\nStudy', icon: <NewStudy />, w: 31, menu: true, line: true },
  { label: 'Apply\nMaterial', icon: <Material />, w: 39 },
  { label: 'Simulation\nEvaluator', icon: <Evaluator />, w: 42 },
  { label: 'Connections\nAdvisor', icon: <Bolt />, w: 56, menu: true },
  { label: 'Initial\nCondition', icon: <InitialIcon />, w: 41, off: true },
  { label: 'Run This\nStudy', icon: <Plot />, w: 41, menu: true, line: true },
  { label: 'Results\nAdvisor', icon: <ResultsIcon />, w: 34, menu: true },
  { label: 'Deformed\nResult', icon: <Deformed />, w: 43, pressed: true },
  { label: 'Compare\nResults', icon: <Compare />, w: 40 },
]

const tabs = [
  'Features', 'Sketch', 'Surfaces', 'Sheet Metal', 'Weldments', 'Mold Tools', 'Direct Editing', 'Markup',
  'Evaluate', 'MBD Dimensions', 'SOLIDWORKS Add-Ins', 'Simulation', 'MBD', 'Analysis Preparation',
]

const features = [
  { text: 'History', icon: <Folder kind="history" />, fold: 'closed', level: 0 },
  { text: 'Sensors', icon: <Folder kind="sensor" />, fold: 'closed', level: 0 },
  { text: 'Annotations', icon: <Folder kind="note" />, fold: 'closed', level: 0 },
  { text: 'Surface Bodies(1)', icon: <Folder kind="surface" />, fold: 'open', level: 0 },
]

const body = <><Meshed /><Pyramid /></>

const study = [
  { text: 'Drop Test 2 from [Drop Test 1] (-Defaul', icon: <StudyIcon />, level: 0, root: true },
  { text: 'Smartphone', icon: <Part tick />, fold: 'open', level: 0 },
  { text: 'SolidBody 2(Phone body)', icon: body, fold: 'closed', level: 1 },
  { text: 'SolidBody 3(Smartscreen)', icon: body, fold: 'closed', level: 1 },
  { text: 'SolidBody 4(Body-Move/', icon: body, fold: 'closed', level: 1 },
  { text: 'Connections', icon: <Bolt />, fold: 'open', level: 0 },
  { text: 'Component Contacts', icon: <Contacts />, fold: 'closed', level: 1 },
  { text: 'Mesh', icon: <Block />, level: 0 },
  { text: 'Setup', icon: <SetupIcon />, level: 0 },
  { text: 'Result Options', icon: <OptionsIcon />, level: 0 },
  { text: 'Results', icon: <Folder kind="result" />, fold: 'open', level: 0, bold: true },
  { text: 'Stress1 (-1st principal-)', icon: <Plot mark="o" />, level: 1, selected: true },
  { text: 'Response1 (-Time-P1-)', icon: <Plot />, level: 1 },
  { text: 'Displacement1 (-Res disp-)', icon: <Plot mark="u" />, level: 1 },
  { text: 'Strain1 (-Equivalent-)', icon: <Plot mark="e" />, level: 1 },
]

const legend = [
  '797.409', '716.668', '635.927', '555.186', '474.445', '393.704', '312.963', '232.223', '151.482', '70.741', '-10.000',
]

const notes = `Model name: Smartphone
Study name: Drop Test 2 from [Drop Test 1](-Default-)
Plot type:  Stress1
Envelope Plot Max
Deformation scale: 1`

/* ---------- parts ---------- */

const Node = ({ node }) => (
  <TreeRow $level={node.level} $bold={node.bold}>
    {!node.root && (
      <Twisty>
        {node.fold === 'closed' && <Closed />}
        {node.fold === 'open' && <Caret color="#555" />}
      </Twisty>
    )}
    <NodeLabel $selected={node.selected} $root={node.root}>{node.icon}{node.text}</NodeLabel>
  </TreeRow>
)

const Drop = ({ w = 15, color }) => (
  <QuickButton $w={w} aria-label="More"><Caret color={color} /></QuickButton>
)

const PhoneModel = () => (
  <Scene width="797" height="415" viewBox="163 98 797 415" aria-hidden="true">
    <defs>
      <linearGradient id="longSide" gradientUnits="userSpaceOnUse" x1="303" y1="180" x2="610" y2="350">
        <stop offset="0" stopColor="#00006e" />
        <stop offset=".12" stopColor="#001285" />
        <stop offset=".3" stopColor="#003090" />
        <stop offset=".55" stopColor="#001c8c" />
        <stop offset=".75" stopColor="#002a90" />
        <stop offset="1" stopColor="#0018a0" />
      </linearGradient>
      <linearGradient id="shortSide" gradientUnits="userSpaceOnUse" x1="620" y1="345" x2="700" y2="292">
        <stop offset="0" stopColor="#00128c" />
        <stop offset=".5" stopColor="#000a70" />
        <stop offset="1" stopColor="#000090" />
      </linearGradient>
      <radialGradient id="halo">
        <stop offset="0" stopColor="#0090a0" />
        <stop offset=".5" stopColor="#0078a0" stopOpacity=".8" />
        <stop offset="1" stopColor="#0040a0" stopOpacity="0" />
      </radialGradient>
      <radialGradient id="greenSpot">
        <stop offset="0" stopColor="#8ccc10" />
        <stop offset=".6" stopColor="#2cac40" />
        <stop offset="1" stopColor="#109080" stopOpacity="0" />
      </radialGradient>
      <radialGradient id="redSpot">
        <stop offset="0" stopColor="#c8400c" />
        <stop offset=".5" stopColor="#6c8a20" />
        <stop offset="1" stopColor="#108060" stopOpacity="0" />
      </radialGradient>
      <clipPath id="sideClip">
        <path d="M308 172L303 190Q304 198 312 202L597 352Q607 358 620 355L696 302L701 285L627 337Q613 344 598 334L316 184Q309 180 308 172z" />
      </clipPath>
    </defs>
    <g clipPath="url(#sideClip)">
      <path d="M300 165h315v195H300z" fill="url(#longSide)" />
      <path d="M615 280h90v80h-90z" fill="url(#shortSide)" />
      <ellipse cx="604" cy="344" rx="13" ry="15" fill="url(#halo)" />
      <ellipse cx="619" cy="346" rx="7" ry="13" fill="url(#halo)" />
      <ellipse cx="604" cy="347" rx="5" ry="12" fill="url(#greenSpot)" />
      <ellipse cx="618" cy="350" rx="4" ry="11" fill="url(#redSpot)" />
    </g>
    <path
      d="M308 172Q309 170 312 168L378 122Q385 117 395 117Q405 117 412 121L690 268Q701 274 702 284Q701 289 694 293L627 337Q613 344 598 334L316 184Q308 179 308 172z"
      fill="#0000cb" stroke="#000046" strokeWidth="1"
    />
    <path d="M308 172L303 190Q304 198 312 202L597 352Q607 358 620 355L696 302L701 286" fill="none" stroke="#00003a" strokeWidth=".8" />
    <path d="M438 400L617 356" stroke="#333" strokeWidth=".8" />
    <circle cx="617" cy="356" r="2" fill="#fff" stroke="#222" strokeWidth=".8" />
    <circle cx="438" cy="400" r="2" fill="#fff" stroke="#222" strokeWidth=".8" />

    <path d="M192 473h15" stroke="#a01818" strokeWidth="2.500" /><path d="M205 470l6 3.500-6 3z" fill="#a01818" />
    <path d="M191 472l3-11" stroke="#2424b8" strokeWidth="2.500" /><path d="M191 463l5-7 1.500 7.500z" fill="#2424b8" />
    <path d="M190 472l-3-6" stroke="#155c1c" strokeWidth="3" /><path d="M184.500 467l1-5.500 5 3z" fill="#155c1c" />
    <circle cx="191" cy="473" r="1.800" fill="#14145c" />
    <text x="210" y="476" fontSize="8" fill="#e02020">X</text>
    <text x="193" y="454" fontSize="8" fill="#2424d8">Z</text>
    <text x="183" y="461" fontSize="8" fill="#1b7a24">Y</text>
  </Scene>
)

export default function App() {
  return (
    <Page>
      <GlobalStyle />

      <TitleBar>
        <Brand>
          <DsLogo />
          <BrandName><b>SOLID</b>WORKS</BrandName>
          <BrandArrow aria-label="Show menu"><Closed /></BrandArrow>
        </Brand>
        <QuickBar>
          <QuickButton aria-label="Home"><Home /></QuickButton>
          <QuickButton $w={26} aria-label="New"><NewDoc /></QuickButton>
          <Drop w={6} />
          <QuickButton $w={25} aria-label="Open"><OpenDoc /></QuickButton>
          <Drop w={6} />
          <QuickButton $w={25} aria-label="Save"><Save /></QuickButton>
          <Drop w={6} />
          <QuickButton $w={25} aria-label="Print"><Print /></QuickButton>
          <Drop w={6} />
          <QuickButton $w={25} aria-label="Undo"><Undo /></QuickButton>
          <Drop w={6} color="#999" />
          <PointerGroup>
            <QuickButton $w={21} aria-label="Select"><Pointer /></QuickButton>
            <Drop w={8} />
          </PointerGroup>
          <QuickButton $w={21} aria-label="Rebuild"><Traffic /></QuickButton>
          <QuickButton $w={21} aria-label="File properties"><ListPanel /></QuickButton>
          <QuickButton $w={21} aria-label="Options"><Gear /></QuickButton>
          <Drop w={8} />
        </QuickBar>
        <DocTitle>Smartphone.SLDPRT *</DocTitle>
        <SearchBox>
          <Prompt />
          <input aria-label="Search Commands" placeholder="Search Commands" />
          <Magnifier />
          <Caret color="#777" />
        </SearchBox>
        <WindowButtons>
          <QuickButton $w={25} aria-label="Account"><User /></QuickButton>
          <QuickButton $w={25} aria-label="Help"><Help /></QuickButton>
          <QuickButton $w={26} aria-label="Minimize"><Minimize /></QuickButton>
          <QuickButton $w={26} aria-label="Restore"><Restore /></QuickButton>
          <QuickButton $w={25} aria-label="Close"><CloseX /></QuickButton>
        </WindowButtons>
      </TitleBar>

      <Ribbon>
        {commands.map(c => (
          <RibbonButton key={c.label} $w={c.w} $menu={c.menu} $line={c.line} $pressed={c.pressed} disabled={c.off}>
            {c.icon}
            <span>{c.label}</span>
            {c.menu && <Caret />}
          </RibbonButton>
        ))}
        <RibbonStack $w="73px" $line>
          <RibbonRow><PlotTools />Plot Tools<Caret /></RibbonRow>
        </RibbonStack>
        <RibbonStack>
          <RibbonRow><Report />Report</RibbonRow>
          <RibbonRow><PlotCamera />Include Image for Report</RibbonRow>
        </RibbonStack>
      </Ribbon>

      <TabRow>
        {tabs.map(t => <Tab key={t} $active={t === 'Simulation'}>{t}</Tab>)}
        <DocButtons>
          <button aria-label="Collapse left pane"><Dock /></button>
          <button aria-label="Collapse right pane"><Dock flip /></button>
          <button aria-label="Minimize document"><Minimize c="#888" /></button>
          <button aria-label="Restore document"><Restore c="#888" /></button>
          <button aria-label="Close document"><CloseX c="#888" /></button>
        </DocButtons>
      </TabRow>

      <Main>
        <Side>
          <Grip $gap={3} />
          <ManagerTabs>
            <ManagerTab $active aria-label="Feature tree"><Part /></ManagerTab>
            <ManagerTab aria-label="Properties"><PropertyPanel /></ManagerTab>
            <ManagerTab aria-label="Configurations"><Config /></ManagerTab>
            <ManagerTab aria-label="Dimensions"><Target /></ManagerTab>
            <ManagerTab aria-label="Display"><Ball /></ManagerTab>
            <MoreTabs aria-label="More tabs"><Chevron dir="right" /></MoreTabs>
          </ManagerTabs>
          <FilterBox><Funnel /><input aria-label="Filter features" /></FilterBox>
          <FeatureArea>
            <FeatureTree>{features.map(n => <Node key={n.text} node={n} />)}</FeatureTree>
            <ScrollTrack $vertical>
              <Chevron dir="up" /><Thumb $vertical $w={9} $h={12} /><Chevron dir="down" />
            </ScrollTrack>
            <ScrollTrack>
              <Chevron dir="left" /><Thumb $w={87} $h={10} /><Chevron dir="right" />
            </ScrollTrack>
          </FeatureArea>
          <Grip $gap={1} />
          <FilterBox><Funnel menu /><input aria-label="Filter study" /></FilterBox>
          <StudyTree>{study.map(n => <Node key={n.text} node={n} />)}</StudyTree>
          <SplitHandle />
        </Side>

        <Viewport>
          <PhoneModel />
          <HeadsUp>
            <HudButton aria-label="Zoom to fit"><ZoomFit /></HudButton>
            <HudButton aria-label="Zoom to area"><ZoomFit area /></HudButton>
            <HudButton aria-label="Previous view"><PrevView /></HudButton>
            <HudButton aria-label="Section view"><Section /></HudButton>
            <HudButton aria-label="Dynamic annotations"><Dynamic /></HudButton>
            <HudButton aria-label="View orientation"><Cube /></HudButton>
            <HudButton $w={10} aria-label="More orientations"><Caret color="#999" /></HudButton>
            <HudButton aria-label="Display style"><Cube face /></HudButton>
            <HudButton $w={10} aria-label="More styles"><Caret color="#999" /></HudButton>
            <HudButton aria-label="Hide and show"><Eye /></HudButton>
            <HudButton $w={10} aria-label="More items"><Caret color="#999" /></HudButton>
            <HudButton aria-label="Edit appearance"><Appearance /></HudButton>
            <HudButton aria-label="Apply scene"><Appearance scene /></HudButton>
            <HudButton $w={10} aria-label="More scenes"><Caret color="#999" /></HudButton>
            <HudButton aria-label="View settings"><Monitor /></HudButton>
            <HudButton $w={10} aria-label="More settings"><Caret color="#999" /></HudButton>
          </HeadsUp>
          <Notes>{notes}</Notes>
          <Callout><span>Max:</span><b>797.409</b></Callout>
          <Legend>
            P1 (N/mm^2 (MPa))
            <LegendScale>
              <ColorBar />
              <Ticks>{legend.map(v => <i key={v} />)}</Ticks>
              <LegendValues>{legend.map(v => <span key={v}>{v}</span>)}</LegendValues>
            </LegendScale>
          </Legend>
          <TaskPane>
            <button aria-label="Resources"><Home /></button>
            <button aria-label="Design library"><Library /></button>
            <button aria-label="File explorer"><FolderOpen /></button>
            <button aria-label="View palette"><Palette /></button>
            <button aria-label="Appearances"><Ball /></button>
            <button aria-label="Custom properties"><PropertyPanel /></button>
          </TaskPane>
        </Viewport>
      </Main>

      <StudyTabs>
        <TabPad />
        <StepButton aria-label="First"><StepMark end /></StepButton>
        <StepButton aria-label="Previous"><StepMark /></StepButton>
        <StepButton aria-label="Next"><StepMark flip /></StepButton>
        <StepButton aria-label="Last"><StepMark flip end /></StepButton>
        <StudyTab>Model</StudyTab>
        <StudyTab>3D Views</StudyTab>
        <StudyTab>Motion Study 1</StudyTab>
        <StudyTab><StudyMark />Drop Test 1</StudyTab>
        <StudyTab $active><StudyMark />Drop Test 2 from [Drop Test 1]</StudyTab>
      </StudyTabs>

      <StatusBar>
        <Product>SOLIDWORKS Premium 2020 SP5.0</Product>
        <StatusItem $w={63}>Editing Part</StatusItem>
        <StatusItem $w={64}><Rebuild /></StatusItem>
        <StatusItem $w={37}>MMGS</StatusItem>
        <StatusItem $w={23}><svg width="5" height="3" viewBox="0 0 5 3"><path d="M0 3h5L2.500 0z" fill="#444" /></svg></StatusItem>
        <Tag />
      </StatusBar>
    </Page>
  )
}
